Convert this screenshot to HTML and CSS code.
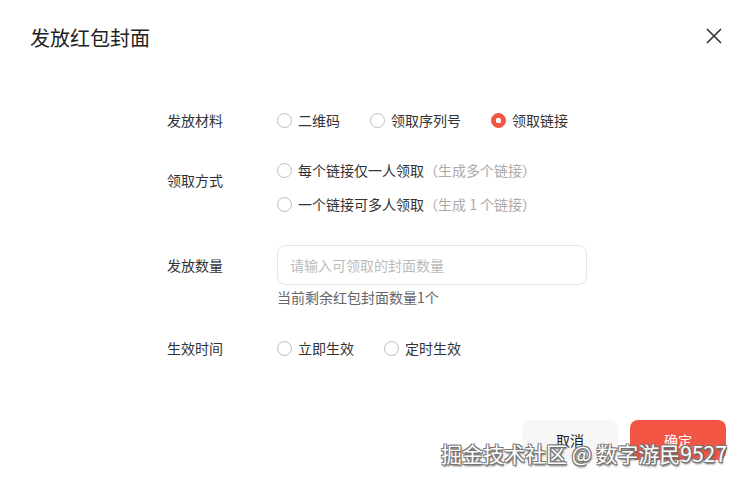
FILE: index.html
```html
<!DOCTYPE html>
<html lang="zh-CN">
<head>
<meta charset="utf-8">
<title>发放红包封面</title>
<link rel="stylesheet" href="styles.css">
</head>
<body>
<div class="dialog">
  <div class="header">
    <div class="title">发放红包封面</div>
    <button class="close" aria-label="关闭">
      <svg width="16" height="16" viewBox="0 0 16 16"><path d="M1 1 L15 15 M15 1 L1 15" stroke="#333" stroke-width="1.6" fill="none"/></svg>
    </button>
  </div>
  <div class="form">
    <div class="row row-1">
      <div class="label">发放材料</div>
      <div class="options inline">
        <label class="opt"><span class="radio"></span>二维码</label>
        <label class="opt"><span class="radio"></span>领取序列号</label>
        <label class="opt"><span class="radio checked"></span>领取链接</label>
      </div>
    </div>
    <div class="row row-2">
      <div class="label label-2">领取方式</div>
      <div class="options stacked">
        <label class="opt"><span class="radio"></span>每个链接仅一人领取<span class="hint">（生成多个链接）</span></label>
        <label class="opt"><span class="radio"></span>一个链接可多人领取<span class="hint">（生成 1 个链接）</span></label>
      </div>
    </div>
    <div class="row row-3">
      <div class="label label-3">发放数量</div>
      <div class="field">
        <div class="input">请输入可领取的封面数量</div>
        <div class="help">当前剩余红包封面数量1个</div>
      </div>
    </div>
    <div class="row row-4">
      <div class="label">生效时间</div>
      <div class="options inline">
        <label class="opt"><span class="radio"></span>立即生效</label>
        <label class="opt"><span class="radio"></span>定时生效</label>
      </div>
    </div>
  </div>
  <div class="footer">
    <button class="btn btn-cancel">取消</button>
    <button class="btn btn-ok">确定</button>
  </div>
  <div class="watermark">掘金技术社区 @ 数字游民9527</div>
</div>
</body>
</html>
```
FILE: styles.css
```css
* { box-sizing: border-box; }
html, body { margin: 0; padding: 0; background: #fff; }
body {
  font-family: "Noto Sans CJK SC", "Noto Sans", sans-serif;
  color: #333;
  width: 744px;
  height: 481px;
  overflow: hidden;
}
.dialog { position: relative; width: 744px; height: 481px; }
.header {
  display: flex;
  justify-content: space-between;
  align-items: center;
  padding: 24px 22px 0 30px;
  height: 52px;
}
.title { font-size: 20px; line-height: 28px; color: #222; }
.close {
  border: 0; background: none; padding: 0; margin: 0;
  width: 16px; height: 16px; display: flex; margin-top: -4px;
}
.form { padding-left: 167px; margin-top: 58px; font-size: 14px; }
.row { display: flex; align-items: flex-start; }
.label { width: 110px; line-height: 20px; color: #333; flex: none; }
.row-2 { margin-top: 30px; }
.label-2 { padding-top: 10px; }
.row-3 { margin-top: 31px; }
.label-3 { line-height: 40px; }
.row-4 { margin-top: 31px; }
.options.inline { display: flex; gap: 30px; }
.options.stacked { display: flex; flex-direction: column; gap: 14px; }
.opt { display: flex; align-items: center; line-height: 20px; color: #333; }
.radio {
  width: 15px; height: 15px; border-radius: 50%;
  border: 1px solid #bdbdbd; margin-right: 6px; flex: none;
  display: flex; align-items: center; justify-content: center;
  background: #fff;
}
.radio.checked { background: #f25443; border-color: #f25443; }
.radio.checked::after {
  content: ""; width: 5px; height: 5px; background: #fff; border-radius: 1.5px;
}
.hint { color: #aaa; white-space: pre; }
.field { display: flex; flex-direction: column; }
.input {
  width: 310px; height: 40px; border: 1px solid #e6e6e6; border-radius: 8px;
  padding: 0 12px; line-height: 38px; color: #bbb; font-size: 14px;
}
.help { margin-top: 2px; line-height: 20px; color: #666; font-size: 14px; }
.footer {
  display: flex; justify-content: flex-end; gap: 12px;
  padding-right: 18px; margin-top: 62px;
}
.btn {
  width: 96px; height: 40px; border: 0; border-radius: 8px;
  font-family: inherit; font-size: 14px; padding: 0;
}
.btn-cancel { background: #f6f6f6; color: #222; }
.btn-ok { background: #f25543; color: #fff; }
.watermark {
  position: absolute; left: 441px; top: 439px;
  font-size: 21px; line-height: 28px; white-space: nowrap;
  color: #fff;
  text-shadow: -1px -1px 0 #777, 1px -1px 0 #777, -1px 1px 0 #777, 1px 1px 0 #777, 1px 2px 2px #555;
}
```
